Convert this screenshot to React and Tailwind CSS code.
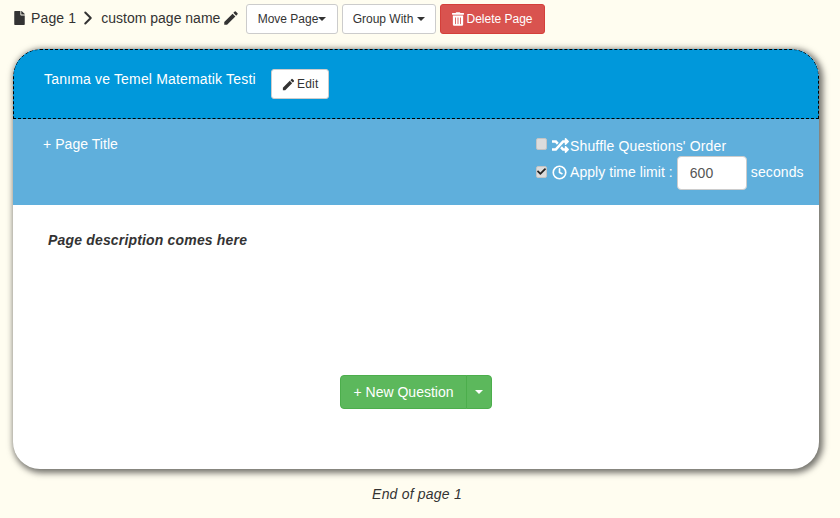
import React from 'react';
import { FaFile, FaRandom, FaTrashAlt, FaCheck } from 'react-icons/fa';
import { FiChevronRight, FiClock } from 'react-icons/fi';
import { MdEdit } from 'react-icons/md';

function Caret() {
  return <span className="inline-block w-0 h-0 border-x-4 border-x-transparent border-t-4 border-t-current" />;
}

function ToolButton({ className, children }) {
  return (
    <button type="button" className={`h-[30px] flex items-center justify-center rounded-[3px] border text-xs ${className}`}>
      {children}
    </button>
  );
}

export default function App() {
  return (
    <div className="min-h-[518px] bg-[#fffdf0] font-['Liberation_Sans',Arial,sans-serif] text-sm text-[#333] overflow-hidden">
      {/* Page toolbar */}
      <div className="h-[49px] pl-[14px] pt-1 flex items-start">
        <div className="h-[28px] flex items-center w-[232px]">
          <FaFile className="w-[11px] h-[14px] text-[#333]" />
          <span className="ml-[6px] tracking-[0.15px]">Page 1</span>
          <FiChevronRight className="ml-[1px] w-[22px] h-[22px]" strokeWidth={2.2} />
          <span className="ml-[2px]">custom page name</span>
          <MdEdit className="ml-[2px] w-[18px] h-[18px]" />
        </div>
        <ToolButton className="w-[92px] bg-white border-[#ccc] text-[#333] gap-0">
          Move Page<Caret />
        </ToolButton>
        <ToolButton className="ml-1 w-[94px] bg-white border-[#ccc] text-[#333] gap-1">
          Group With <Caret />
        </ToolButton>
        <ToolButton className="ml-1 w-[105px] bg-[#d9534f] border-[#d43f3a] text-white gap-[2px]">
          <FaTrashAlt className="w-3 h-[14px]" />
          Delete Page
        </ToolButton>
      </div>

      {/* Page card */}
      <div className="mx-[13px] w-[806px] h-[420px] rounded-[27px] bg-white shadow-[2px_2px_6px_2px_rgba(0,0,0,0.55)] overflow-hidden">
        <div className="h-[70px] bg-[#0098db] border border-dashed border-black rounded-t-[27px] pl-[30px] flex items-start">
          <span className="mt-[19px] text-white tracking-[0.17px]">Tanıma ve Temel Matematik Testi</span>
          <button type="button" className="ml-[15px] mt-[19px] w-[58px] h-[30px] flex items-center justify-center gap-[1px] rounded-[3px] border border-[#ccc] bg-white text-xs text-[#333] tracking-[0.2px]">
            <MdEdit className="w-[15px] h-[15px]" />
            Edit
          </button>
        </div>

        <div className="h-[86px] bg-[#5fafdc] flex justify-between text-white">
          <div className="ml-[30px] mt-[15px] tracking-[0.05px]">+ Page Title</div>
          <div className="w-[283px] mt-[13px]">
            <div className="h-6 flex items-center">
              <span className="w-[11px] h-3 bg-[#dcdcdc] rounded-[2px] border border-[#c4c4c4]" />
              <FaRandom className="ml-[5px] mt-[3px] w-[17px] h-[17px]" />
              <span className="ml-[1px] mt-[3px] tracking-[0.15px]">Shuffle Questions' Order</span>
            </div>
            <div className="flex items-center">
              <span className="w-[11px] h-3 -mt-[3px] bg-[#dcdcdc] rounded-[2px] border border-[#c4c4c4] flex items-center justify-center">
                <FaCheck className="w-[9px] h-[9px] text-[#222]" />
              </span>
              <FiClock className="ml-[5px] -mt-[2px] w-[15px] h-[15px]" strokeWidth={2.6} />
              <span className="ml-[3px] -mt-[2px] tracking-[0.05px]">Apply time limit :</span>
              <input
                type="text"
                defaultValue="600"
                className="ml-[4px] w-[70px] h-[34px] rounded-[4px] border border-[#ccc] bg-white px-3 text-sm text-[#555] outline-none"
              />
              <span className="ml-[4px] -mt-[2px] tracking-[0.1px]">seconds</span>
            </div>
          </div>
        </div>

        <div className="pl-[35px] pt-[25px]">
          <p className="font-bold italic tracking-[0.17px] text-[#333]">Page description comes here</p>
        </div>

        <div className="mt-[125px] flex justify-center">
          <div className="flex h-[34px] text-white">
            <button type="button" className="w-[127px] rounded-l-[4px] border border-[#4cae4c] bg-[#5cb85c]">+ New Question</button>
            <button type="button" className="w-[26px] -ml-px flex items-center justify-center rounded-r-[4px] border border-[#4cae4c] bg-[#5cb85c]">
              <Caret />
            </button>
          </div>
        </div>
      </div>

      <p className="mt-[15px] text-center italic text-[#333] pr-[6px] tracking-[0.2px]">End of page 1</p>
    </div>
  );
}
